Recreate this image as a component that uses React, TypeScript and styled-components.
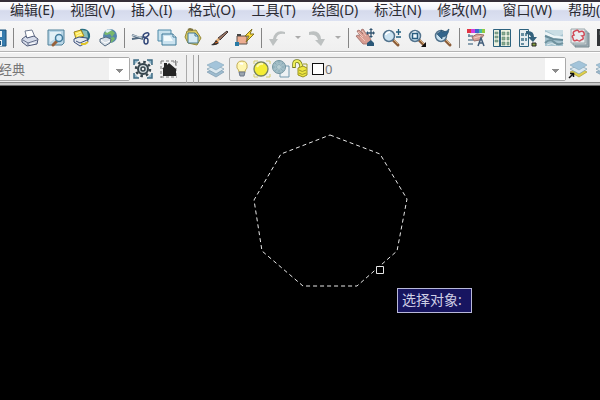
import React from 'react';
import styled, { createGlobalStyle } from 'styled-components';

const GlobalStyle = createGlobalStyle`
  * { box-sizing: border-box; }
  html, body, #root { height: 100%; margin: 0; }
  body {
    background: #000;
    overflow: hidden;
    font-family: "Noto Sans", "Noto Sans CJK SC", sans-serif;
  }
  button, select { font: inherit; color: inherit; }
`;

const AppFrame = styled.div`
  display: flex;
  flex-direction: column;
  height: 100%;
  overflow: hidden;
`;

const MenuBar = styled.nav`
  display: flex;
  flex: none;
  gap: 16px;
  height: 21px;
  padding-left: 10px;
  border-top: 2px solid #35303a;
  background: linear-gradient(#ffffff 0%, #f0f3fa 38%, #d5daec 46%, #dde2f2 100%);
  overflow: hidden;
`;

const MenuItem = styled.button`
  flex: none;
  padding: 0;
  border: 0;
  background: none;
  color: #2b2b33;
  font-size: 14px;
  line-height: 16px;
  height: 16px;
  white-space: nowrap;
`;

const StandardBar = styled.div`
  display: flex;
  flex: none;
  align-items: center;
  gap: 6px;
  height: 31px;
  padding-top: 3px;
  border-bottom: 1px solid #b4b4b4;
  background: linear-gradient(#f7f7f7, #efefef);
  overflow: hidden;
`;

const LayerBar = styled.div`
  display: flex;
  flex: none;
  align-items: center;
  height: 34px;
  padding: 2px 0 4px;
  border-top: 1px solid #fff;
  background: linear-gradient(#f0f0f0 0 29px, #8a8a8a 29px 30px, #c9c9c9 30px 32px, #6c6c6c 32px 33px);
  overflow: hidden;
`;

const IconButton = styled.button<{ $narrow?: boolean; $clipped?: boolean }>`
  display: flex;
  flex: none;
  align-items: center;
  justify-content: center;
  width: ${p => (p.$narrow ? '8px' : '20px')};
  height: 20px;
  margin-left: ${p => (p.$clipped ? '-13px' : '0')};
  padding: 0;
  border: 0;
  background: none;
  svg { display: block; flex: none; }
`;

const Separator = styled.span`
  flex: none;
  width: 1px;
  height: 20px;
  background: #858585;
`;

const ComboFrame = styled.div<{ $grow?: boolean }>`
  display: flex;
  flex: ${p => (p.$grow ? '1' : 'none')};
  align-items: center;
  width: ${p => (p.$grow ? 'auto' : '132px')};
  min-width: 0;
  height: 24px;
  margin-left: ${p => (p.$grow ? '4px' : '-2px')};
  padding-left: ${p => (p.$grow ? '2px' : '0')};
  border: 1px solid #a9a9a9;
  border-radius: 2px;
  background: #f0f0f0;
`;

const ComboSelect = styled.select`
  appearance: none;
  flex: 1;
  min-width: 0;
  height: 22px;
  padding: 0 20px 0 0;
  border: 0;
  outline: 0;
  color: #777;
  font-size: 13px;
  line-height: 20px;
  background:
    linear-gradient(#8c8c8c, #8c8c8c) right 9px top 14px / 1px 1px no-repeat,
    linear-gradient(#8c8c8c, #8c8c8c) right 8px top 13px / 3px 1px no-repeat,
    linear-gradient(#8c8c8c, #8c8c8c) right 7px top 12px / 5px 1px no-repeat,
    linear-gradient(#8c8c8c, #8c8c8c) right 6px top 11px / 7px 1px no-repeat,
    linear-gradient(#fff, #fff) right / 20px 100% no-repeat;
`;

const ToolPair = styled.div`
  display: flex;
  flex: none;
  gap: 6px;
  margin-left: 3px;
`;

const ToolbarGrip = styled.span`
  flex: none;
  width: 13px;
  height: 28px;
  margin: 0 6px 0 7px;
  border-left: 1px solid #aaa;
  border-right: 1px solid #999;
  background: linear-gradient(#aaa, #aaa) 6px 0 / 1px 100% no-repeat;
`;

const ColorSwatch = styled.button`
  flex: none;
  width: 12px;
  height: 12px;
  margin: 0 1px 0 0;
  padding: 0;
  border: 1px solid #111;
  background: #fff;
`;

const LayerTools = styled.div`
  display: flex;
  flex: none;
  gap: 6px;
  width: 32px;
  margin-left: 2px;
`;

const DrawingCanvas = styled.main`
  position: relative;
  flex: 1;
  min-height: 0;
  background: #000;
  overflow: hidden;
`;

const Drawing = styled.svg`
  position: absolute;
  left: 0;
  top: 0;
`;

const CommandPrompt = styled.div`
  position: absolute;
  left: 397px;
  top: 202px;
  width: 75px;
  height: 25px;
  padding-left: 4px;
  border: 1px solid #b9b9da;
  background: #171560;
  color: #cfcfe6;
  font-size: 14px;
  line-height: 22px;
  white-space: nowrap;
`;

const Glyph = ({ children, size = 20 }: { children: React.ReactNode; size?: number }) => (
  <svg width={size} height={20} viewBox={`0 0 ${size} 20`} fill="none" aria-hidden="true">{children}</svg>
);

const Caret = () => <Glyph size={8}><path d="M1 8h6L4 11z" fill="#aaa" /></Glyph>;

const Lens = ({ children }: { children?: React.ReactNode }) => (
  <Glyph>
    <path d="m12 12 5 5" stroke="#8b5c38" strokeWidth="3" strokeLinecap="round" />
    <path d="m13 12 4 4" stroke="#dbb27c" />
    <circle cx="8" cy="8" r="5.5" fill="#cce3f1" stroke="#52738d" strokeWidth="1.5" />
    <path d="M4.5 7Q6 4 9 4" stroke="#fff" strokeWidth="1.5" />
    {children}
  </Glyph>
);

const icons = {
  save: <Glyph><path d="M2 2h17v16H4l-2-2z" fill="#377cae" stroke="#1d527b" /><path d="M6 3h9v6H6zM6 12h9v6H6z" fill="#eaf3f8" /><path d="M11 13h3v4h-3z" fill="#1d527b" /></Glyph>,
  print: <Glyph>
    <path d="m5 3 7-1 3 7-8 2z" fill="#fff" stroke="#707b91" />
    <path d="m2 11 4-3 1 2 7-2 4 3-1 5-10 2-5-4z" fill="#d6dcea" stroke="#4d5876" />
    <path d="m3 12 5 3 9-3M8 15v2" stroke="#68728c" /><path d="m10 16 5-1" stroke="#fff" />
  </Glyph>,
  preview: <Glyph>
    <path d="M2 2h16v13l-2 2H2z" fill="#b9d6e7" stroke="#4f8099" /><path d="M4 4h11v3L4 14z" fill="#e3f0f6" />
    <path d="m11 13-4 4" stroke="#976039" strokeWidth="3" strokeLinecap="round" />
    <circle cx="13" cy="10" r="3.5" fill="#d1eaf8" stroke="#427b9c" strokeWidth="1.5" />
  </Glyph>,
  publish: <Glyph>
    <path d="M8 1q8-1 10 5 1 6-5 9l-3-5z" fill="#2a6f83" /><path d="m10 2 5 1 1 6-4 4z" fill="#8bc0bb" />
    <path d="m2 4 7-2 3 6-8 3z" fill="#ffe74f" stroke="#9c8420" />
    <path d="m4 6 5-2M5 8l5-2" stroke="#fff9b4" />
    <path d="m2 11 5-2 8 1 1 4-8 4-6-4z" fill="#e5e9ef" stroke="#3d517d" /><path d="m4 13 4 2 7-3" stroke="#3d517d" />
    <path d="M9 16h4l3-2" stroke="#e1c72b" strokeWidth="2" />
  </Glyph>,
  globe: <Glyph>
    <circle cx="12" cy="8" r="7" fill="#5587aa" /><path d="M8 3q5-3 9 2l-3 4-2-3-4 1-2-1zM11 10l5-1 1 2-4 4z" fill="#79b86b" />
    <path d="M7 3q3-3 7-1L9 5z" fill="#deeff5" />
    <path d="m2 11 6-2 5 2-1 4-5 3-5-4z" fill="#d7dfe7" stroke="#546a80" /><path d="m3 12 4 3 5-2" stroke="#fff" />
  </Glyph>,
  cut: <Glyph>
    <path d="m1 7 11 4M1 11l12-2" stroke="#536a80" strokeWidth="2" /><path d="m1 7 10 3" stroke="#c9d5dc" />
    <ellipse cx="15" cy="7" rx="3" ry="1.8" transform="rotate(-30 15 7)" stroke="#334879" strokeWidth="1.5" />
    <ellipse cx="15" cy="13" rx="2" ry="3" stroke="#334879" strokeWidth="1.5" />
  </Glyph>,
  copy: <Glyph>
    <path d="M1 2h13v11H1z" fill="#c7e1ed" stroke="#4c89a8" /><path d="M5 6h11l3 3v8H5z" fill="#cbe3f0" stroke="#3d7897" />
    <path d="M16 6v3h3" fill="#fff" stroke="#3d7897" /><path d="M7 8h6l3 5H7z" fill="#f2fafc" />
  </Glyph>,
  paste: <Glyph>
    <path d="m4 3 9-1 5 8-4 7-9-2-3-6z" fill="#d9c963" stroke="#958937" />
    <path d="M5 5h7l3 3v7H5z" fill="#d5eaf3" stroke="#477b91" /><path d="M12 5v3h3" stroke="#477b91" />
    <path d="m5 2 2-1 3 1" stroke="#817642" strokeWidth="2" />
  </Glyph>,
  brush: <Glyph>
    <path d="M18 3 9 10l2 2 8-8z" fill="#9b7664" stroke="#463a39" /><path d="m9 10 2 2-3 3-2-2z" fill="#e1ae77" />
    <path d="m7 12 3 3q-3 3-8 2 3-1 5-5z" fill="#32302f" /><path d="m6 15 3-1" stroke="#d1621c" />
  </Glyph>,
  blockEdit: <Glyph>
    <path d="M2 8h10v8H2z" fill="#edad91" stroke="#5c524c" /><path d="M0 14h4v4H0z" fill="#287ba6" />
    <path d="m17 1-7 7h4l-3 6 8-8h-4z" fill="#ffdf38" stroke="#80711f" /><path d="M2 7h4" stroke="#444" strokeWidth="2" />
  </Glyph>,
  undo: <Glyph><path d="M17 4Q7 1 5 11H1l4 7 5-7H8q1-6 9-5z" fill="#bdc1c1" /></Glyph>,
  redo: <Glyph><path d="M1 4q11-3 12 7h4l-4 7-6-6h3Q9 6 1 7z" fill="#bdc1c1" /></Glyph>,
  pan: <Glyph>
    <path d="m2 3 2-1 4 4-2-4 2-1 4 6 1-1 3 6-4 4H8L1 8l2-1 3 2z" fill="#d99e93" stroke="#9c6964" strokeWidth=".8" />
    <path d="m3 4 5 5M7 3l4 5M5 8l5 5" stroke="#f0c7bb" /><path d="m12 15 4-3 3 3v3h-7z" fill="#2b5878" />
    <path d="M16 2v6M13 5h6" stroke="#335570" strokeWidth="1.3" /><path d="m16 0-2 2h4zM16 10l-2-2h4zM11 5l2-2v4zM20 5l-2-2v4z" fill="#335570" />
  </Glyph>,
  zoom: <Lens><path d="M15 4h5M17.5 1v6M15 9h5" stroke="#246080" strokeWidth="1.3" /></Lens>,
  zoomWindow: <Lens><path d="M5.5 5.5h5v5h-5z" fill="#eff8fd" stroke="#285c7f" strokeWidth="1.5" /><path d="M19 14v5h-5z" fill="#111" /></Lens>,
  zoomPrevious: <Lens><path d="m4 6 5-4v2q5 0 7-3-1 8-7 8v2z" fill="#33658c" stroke="#26506e" strokeWidth=".7" /></Lens>,
  properties: <Glyph>
    <path d="M1 1h4v4H1z" fill="#e13544" /><path d="M5 1h4v4H5z" fill="#d140df" /><path d="M9 1h4v4H9z" fill="#4064d0" /><path d="M13 1h3v4h-3z" fill="#45baa4" /><path d="M16 1h3v4h-3z" fill="#91c940" />
    <path d="M2 8h5M3 6v3M2 12h5M2 16h5" stroke="#68879c" strokeWidth="1.5" />
    <path d="m6 9 5-3 7 1-4 5-6 1z" fill="#d9a198" stroke="#986e69" /><path d="m8 10 7-2" stroke="#f2cfc6" />
    <path d="m12 18 3-8 3 8M13 15h4" stroke="#425e7b" strokeWidth="1.5" />
  </Glyph>,
  designCenter: <Glyph>
    <path d="M1.5 1.5h17v17h-17z" fill="#eef2df" stroke="#2d627e" /><path d="M8 2v16" stroke="#2d627e" strokeWidth="2" />
    <path d="M3 4h3v2H3zM3 8h3v2H3zM3 12h3v2H3zM10 4h3v3h-3zM15 4h2v3h-2zM10 9h3v3h-3zM15 9h2v3h-2zM10 14h3v3h-3zM15 14h2v3h-2z" fill="#8dad8b" stroke="#56807f" strokeWidth=".5" />
  </Glyph>,
  toolPalette: <Glyph>
    <path d="M1.500 1.500h9v17h-9z" fill="#e7edf0" stroke="#2d627e" /><path d="M3 5h3v3H3zM7 5h2v3H7zM3 10h3v3H3zM7 10h2v3H7zM3 15h3v2H3z" fill="#668da0" />
    <path d="M8 3q8-1 8 6h3l-4 5-5-5h3q-1-3-5-3z" fill="#34627d" /><path d="M14 15h4v3h-4z" fill="#839d3e" stroke="#222" />
  </Glyph>,
  sheetSet: <Glyph>
    <path d="M1 2h18v16H1z" fill="#a6c3cf" /><path d="M1 2h18v4l-5 3z" fill="#c9dde4" />
    <path d="m1 5 9 4 9 1" stroke="#edf5f7" strokeWidth="3" /><path d="m1 8 8 3 10 1" stroke="#668a98" strokeWidth="2" />
    <path d="M1 15q5-5 9-1t9 1" stroke="#6f929e" strokeWidth="2" /><path d="M3 17q5-3 9 0" stroke="#dae8eb" />
  </Glyph>,
  markup: <Glyph>
    <path d="M5 5h14v14H5z" fill="#9fafb6" stroke="#74868e" /><path d="M3 3h14v14H3z" fill="#c7d0d3" stroke="#87979f" /><path d="M1 1h14v14H1z" fill="#e9edef" stroke="#9ba8ac" />
    <path d="M5 3q3-2 4 1 4-2 5 1t-2 3q3 3-1 4-1 2-4 0-4 2-4-2-2-2 1-3-2-3 1-4z" stroke="#d04b58" strokeWidth="1.5" />
  </Glyph>,
  calculator: <Glyph><path d="M1 1h17v17H1z" fill="#323538" /><path d="M3 3h13v4H3z" fill="#52595b" /></Glyph>,
};

const GearIcon = () => <Glyph>
  <path d="M1 1h5L1 6zM14 1h5v5zM1 14l5 5H1zM19 14v5h-5z" fill="#91b7ca" />
  <path d="M1 6V1h5M14 1h5v5M19 14v5h-5M6 19H1v-5" stroke="#3f6c84" strokeWidth="1.5" />
  <circle cx="10" cy="10" r="7" stroke="#36454d" strokeWidth="2.5" strokeDasharray="2.5 3" />
  <circle cx="10" cy="10" r="5" fill="#cfd8dc" stroke="#36454d" strokeWidth="2" /><circle cx="10" cy="10" r="2" fill="#f0f0f0" stroke="#36454d" strokeWidth="1.500" />
</Glyph>;

const HomeIcon = () => <Glyph>
  <path d="M2 2h15M2 18h16M2 2v17M17 4v15" stroke="#747474" strokeDasharray="3 2" />
  <path d="m3 10 2-2V4h3v2l2-2 7 6v7H4v-7z" fill="#242424" /><path d="M14 3h5M16.5 1v5" stroke="#888" />
</Glyph>;

const LayersIcon = ({ accent = false }: { accent?: boolean }) => <Glyph>
  <path d="m2 13 10-4 7 4-8 5z" fill={accent ? '#e0d04a' : '#9fbccf'} stroke={accent ? '#a89c35' : '#7c9bb0'} strokeWidth=".7" />
  <path d="m2 10 9-4 8 4-8 5z" fill="#dce8ef" stroke="#7899ae" strokeWidth=".7" />
  <path d="m2 6 9-4 8 4-8 5z" fill="#a3c4da" stroke="#8cadc0" strokeWidth=".7" />
  {accent && <path d="m1 19 4-4M2 14.500h3.500v3.500" stroke="#111" strokeWidth="1.500" />}
</Glyph>;

const BulbIcon = () => <Glyph>
  <path d="M7 13q0-2-2-4Q4 2 10 2t5 7q-2 2-2 4z" fill="#fff6b1" stroke="#c3af59" /><path d="M7 13h6l-1 4H8z" fill="#9ba5ae" stroke="#6c7789" /><path d="M8 5q1-1 3 0" stroke="#fff" strokeWidth="2" />
</Glyph>;

const SunIcon = () => <Glyph>
  <path d="M2 5V2h4M14 2h4v3M18 15v3h-4M6 18H2v-3" stroke="#d5ce6c" />
  <circle cx="9" cy="10" r="7" fill="#f4ed35" stroke="#77845c" strokeWidth="1.3" /><path d="M5 8q2-4 6-3" stroke="#fffba9" strokeWidth="2" />
</Glyph>;

const FreezeIcon = () => <Glyph>
  <path d="M8 7h9v11H8z" fill="#eef2f4" stroke="#7399ae" /><circle cx="7" cy="8" r="6.500" fill="#a2bdc6" stroke="#7294a0" />
  <path d="M7 2v12M1 8h12M3 4l8 8M11 4l-8 8" stroke="#86a8b4" strokeDasharray="2 1" /><circle cx="7" cy="8" r="2" fill="#b9cfd4" />
</Glyph>;

const LockIcon = () => <Glyph>
  <path d="M2 9V5q0-3 3-3t4 4v4" stroke="#747c18" strokeWidth="3.500" /><path d="M2 8V5q0-3 3-3t4 4v4" stroke="#eff05b" strokeWidth="2" />
  <path d="m6 9 5-2 4 2v7l-4 2-5-2z" fill="#eee640" stroke="#969022" /><path d="M7 11q3 3 7 0M7 14q3 3 7 0" stroke="#a09c2b" /><path d="M11 5h4v4" stroke="#a09c2b" />
</Glyph>;

const menus = ['编辑(E)', '视图(V)', '插入(I)', '格式(O)', '工具(T)', '绘图(D)', '标注(N)', '修改(M)', '窗口(W)', '帮助(H)'];

type IconName = keyof typeof icons;
type ToolEntry = IconName | '|' | 'caret';
const tools: ToolEntry[] = [
  'save', '|', 'print', 'preview', 'publish', 'globe', '|',
  'cut', 'copy', 'paste', 'brush', 'blockEdit', '|',
  'undo', 'caret', 'redo', 'caret', '|',
  'pan', 'zoom', 'zoomWindow', 'zoomPrevious', '|',
  'properties', 'designCenter', 'toolPalette', 'sheetSet', 'markup', 'calculator',
];

export default function App() {
  return (
    <AppFrame>
      <GlobalStyle />
      <MenuBar>{menus.map(name => <MenuItem key={name}>{name}</MenuItem>)}</MenuBar>
      <StandardBar role="toolbar">
        {tools.map((tool, i) => {
          if (tool === '|') return <Separator key={i} />;
          if (tool === 'caret') return <IconButton key={i} $narrow aria-label="history"><Caret /></IconButton>;
          return <IconButton key={i} $clipped={i === 0} aria-label={tool}>{icons[tool]}</IconButton>;
        })}
      </StandardBar>
      <LayerBar role="toolbar">
        <ComboFrame>
          <ComboSelect aria-label="workspace"><option>经典</option></ComboSelect>
        </ComboFrame>
        <ToolPair>
          <IconButton aria-label="workspace settings"><GearIcon /></IconButton>
          <IconButton aria-label="my workspace"><HomeIcon /></IconButton>
        </ToolPair>
        <ToolbarGrip />
        <IconButton aria-label="layer properties"><LayersIcon /></IconButton>
        <ComboFrame $grow>
          <IconButton aria-label="layer on"><BulbIcon /></IconButton>
          <IconButton aria-label="layer thaw"><SunIcon /></IconButton>
          <IconButton aria-label="viewport freeze"><FreezeIcon /></IconButton>
          <IconButton aria-label="layer unlock"><LockIcon /></IconButton>
          <ColorSwatch aria-label="layer color" />
          <ComboSelect aria-label="layer"><option>0</option></ComboSelect>
        </ComboFrame>
        <LayerTools>
          <IconButton aria-label="make layer current"><LayersIcon accent /></IconButton>
          <IconButton aria-label="previous layer"><LayersIcon /></IconButton>
        </LayerTools>
      </LayerBar>
      <DrawingCanvas>
        <Drawing width="600" height="314" viewBox="0 0 600 314" fill="none" aria-hidden="true">
          <path d="M330 49 380 68 407 113 397 165 357 200H303L262 165 254 114 281 68Z" stroke="#e8e8e8" strokeDasharray="4 3" />
          <path d="M376.500 180.500h7v7h-7z" fill="#000" stroke="#e6e6e6" />
        </Drawing>
        <CommandPrompt>选择对象:</CommandPrompt>
      </DrawingCanvas>
    </AppFrame>
  );
}
